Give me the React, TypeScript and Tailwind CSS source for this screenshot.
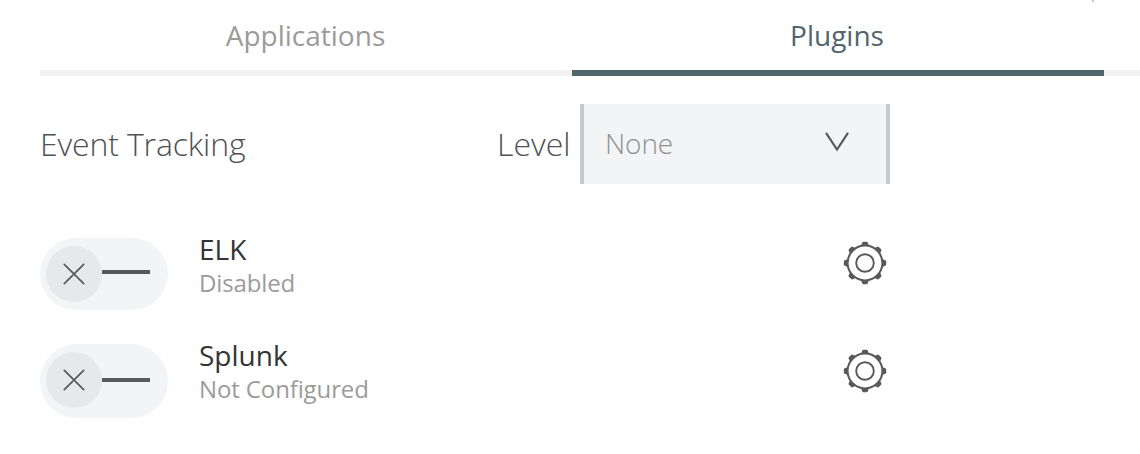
type Plugin = { name: string; status: string; toggleClass: string; lineClass: string; gearClass: string };

const plugins: Plugin[] = [
  { name: "ELK", status: "Disabled", toggleClass: "h-[72px]", lineClass: "mb-1", gearClass: "mt-[3px]" },
  { name: "Splunk", status: "Not Configured", toggleClass: "h-[74px]", lineClass: "", gearClass: "mt-[5px]" },
];

function Gear() {
  const teeth = [0, 45, 90, 135, 180, 225, 270, 315];
  return (
    <svg className="block h-11 w-11" viewBox="-22 -22 44 44" fill="none" stroke="#58595b">
      <circle r="17.4" strokeWidth="2" />
      <circle r="8.8" strokeWidth="1.9" />
      {teeth.map((angle) => (
        <path
          key={angle}
          transform={`rotate(${angle})`}
          d="M-4 -17 L-2.8 -20.3 Q-2.5 -21.2 -1.6 -21.2 H1.6 Q2.5 -21.2 2.8 -20.3 L4 -17 Z"
          fill="#58595b"
          stroke="none"
        />
      ))}
    </svg>
  );
}

function Toggle({ toggleClass, lineClass }: { toggleClass: string; lineClass: string }) {
  return (
    <button className={`flex w-32 shrink-0 items-start rounded-full bg-[#f3f4f6] pt-2 pl-1.5 ${toggleClass}`}>
      <span className="flex h-14 w-14 items-center justify-center rounded-full bg-[#e7e8ea]">
        <svg className="h-[22px] w-[22px]" viewBox="0 0 22 22" stroke="#58595b" strokeWidth="1.7" strokeLinecap="round">
          <path d="M1.3 1.3 20.7 20.7M20.7 1.3 1.3 20.7" />
        </svg>
      </span>
      <span className="flex h-14 items-center">
        <span className={`h-1 w-12 bg-[#595a5a] ${lineClass}`} />
      </span>
    </button>
  );
}

export default function App() {
  return (
    <main className="relative h-[454px] w-[1140px] overflow-hidden bg-white pl-10 font-['Open_Sans','Noto_Sans',sans-serif] text-[#505153]">
      <span className="absolute top-0 left-[1092px] h-0.5 w-0.5 bg-[#c7c8ca]" />
      <nav className="flex h-[76px] text-[28px] leading-[70px]">
        <div className="w-[532px] border-b-[6px] border-[#f1f1f1] pr-px text-center text-[#9b9b9b]">Applications</div>
        <div className="w-[532px] border-b-[6px] border-[#51656f] pr-0.5 text-center text-[#51656f]">Plugins</div>
        <div className="flex-1 border-b-[6px] border-[#f1f1f1]" />
      </nav>
      <section className="mt-7 flex h-20 w-[850px] text-[32px] leading-[80px] font-light">
        <h2 className="w-[457px] tracking-[-0.15px]">Event Tracking</h2>
        <span className="w-[83px]">Level</span>
        <button className="flex w-[310px] items-center justify-between border-x-4 border-[#c8c9cb] bg-[#f3f4f6] pr-[37px] pl-[21px] text-[28px] tracking-[-0.1px] text-[#8f9092]">
          <span className="mb-0.5">None</span>
          <svg className="mb-[5px] h-5 w-[24px]" viewBox="0 0 24 20" fill="none" stroke="#58595b" strokeWidth="2.2">
            <path d="M1 .8 12 17.5 23 .8" />
          </svg>
        </button>
      </section>
      <ul className="mt-[54px] flex w-[850px] flex-col gap-[34px]">
        {plugins.map((p) => (
          <li key={p.name} className="flex h-[72px]">
            <Toggle toggleClass={p.toggleClass} lineClass={p.lineClass} />
            <div className="-mt-[7px] ml-[31px] flex-1">
              <div className="text-[28px] leading-9 text-[#333435]">{p.name}</div>
              <div className="text-[24px] leading-8 tracking-[-0.12px] text-[#9b9b9b]">{p.status}</div>
            </div>
            <button className={`mr-[3px] h-11 ${p.gearClass}`}>
              <Gear />
            </button>
          </li>
        ))}
      </ul>
    </main>
  );
}
